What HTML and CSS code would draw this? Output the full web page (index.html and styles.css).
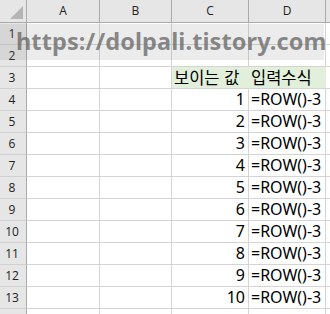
FILE: index.html
```html
<!DOCTYPE html>
<html lang="ko">
<head>
<meta charset="utf-8">
<link rel="stylesheet" href="styles.css">
</head>
<body>
<div class="sheet">
  <div class="grid">
    <div class="corner"><svg width="27" height="23" viewBox="0 0 27 23"><polygon points="23,6 23,19 10,19" fill="#b5b5b5"/></svg></div>
    <div class="ch">A</div><div class="ch">B</div><div class="ch">C</div><div class="ch">D</div><div class="ch last"></div>

    <div class="rh">1</div><div class="c"></div><div class="c"></div><div class="c"></div><div class="c"></div><div class="c last"></div>
    <div class="rh">2</div><div class="c"></div><div class="c"></div><div class="c"></div><div class="c"></div><div class="c last"></div>
    <div class="rh">3</div><div class="c"></div><div class="c"></div><div class="c fill">보이는 값</div><div class="c fill">입력수식</div><div class="c last"></div>
    <div class="rh">4</div><div class="c"></div><div class="c"></div><div class="c num">1</div><div class="c">=ROW()-3</div><div class="c last"></div>
    <div class="rh">5</div><div class="c"></div><div class="c"></div><div class="c num">2</div><div class="c">=ROW()-3</div><div class="c last"></div>
    <div class="rh">6</div><div class="c"></div><div class="c"></div><div class="c num">3</div><div class="c">=ROW()-3</div><div class="c last"></div>
    <div class="rh">7</div><div class="c"></div><div class="c"></div><div class="c num">4</div><div class="c">=ROW()-3</div><div class="c last"></div>
    <div class="rh">8</div><div class="c"></div><div class="c"></div><div class="c num">5</div><div class="c">=ROW()-3</div><div class="c last"></div>
    <div class="rh">9</div><div class="c"></div><div class="c"></div><div class="c num">6</div><div class="c">=ROW()-3</div><div class="c last"></div>
    <div class="rh">10</div><div class="c"></div><div class="c"></div><div class="c num">7</div><div class="c">=ROW()-3</div><div class="c last"></div>
    <div class="rh">11</div><div class="c"></div><div class="c"></div><div class="c num">8</div><div class="c">=ROW()-3</div><div class="c last"></div>
    <div class="rh">12</div><div class="c"></div><div class="c"></div><div class="c num">9</div><div class="c">=ROW()-3</div><div class="c last"></div>
    <div class="rh">13</div><div class="c"></div><div class="c"></div><div class="c num">10</div><div class="c">=ROW()-3</div><div class="c last"></div>
    <div class="rh"></div><div class="c"></div><div class="c"></div><div class="c"></div><div class="c"></div><div class="c last"></div>
  </div>
  <div class="watermark">https://dolpali.tistory.com</div>
</div>
</body>
</html>
```
FILE: styles.css
```css
html, body {
  margin: 0;
  padding: 0;
  background: #ffffff;
  overflow: hidden;
}
.sheet {
  position: relative;
  width: 330px;
  height: 314px;
  overflow: hidden;
}
.grid {
  display: grid;
  grid-template-columns: 27px 73px 72px 77px 77px 10px;
  grid-template-rows: 23px repeat(14, 22px);
}
.corner {
  background: #e6e6e6;
  border-right: 1px solid #ababab;
  border-bottom: 1px solid #ababab;
  box-sizing: border-box;
}
.corner svg { display: block; }
.ch {
  background: #e6e6e6;
  border-right: 1px solid #ababab;
  border-bottom: 1px solid #ababab;
  box-sizing: border-box;
  display: flex;
  align-items: center;
  justify-content: center;
  font-family: "Open Sans", "Noto Sans", sans-serif;
  font-size: 12px;
  color: #222;
  padding-bottom: 1px;
}
.ch.last { border-right: none; }
.rh {
  background: #e6e6e6;
  border-right: 1px solid #ababab;
  border-bottom: 1px solid #d0d0d0;
  box-sizing: border-box;
  display: flex;
  align-items: center;
  justify-content: center;
  font-family: "Open Sans", "Noto Sans", sans-serif;
  font-size: 12px;
  color: #222;
  padding-right: 2px;
}
.c {
  border-right: 1px solid #d4d4d4;
  border-bottom: 1px solid #d4d4d4;
  box-sizing: border-box;
  display: flex;
  align-items: flex-end;
  padding: 0 2px 0 2px;
  font-family: "Noto Sans", "Noto Sans CJK KR", sans-serif;
  font-size: 16px;
  line-height: 21px;
  color: #000;
  white-space: nowrap;
}
.c.last { border-right: none; }
.num { justify-content: flex-end; padding-right: 3px; }
.fill {
  background: #e2efda;
  border-right-color: #e2efda;
  font-family: "Noto Sans CJK KR", sans-serif;
  font-size: 16.5px;
}
.watermark {
  position: absolute;
  left: 0;
  top: 24px;
  width: 324px;
  height: 36px;
  background: rgba(120, 120, 120, 0.14);
  box-sizing: border-box;
  padding-left: 16px;
  font-family: "Noto Sans", "DejaVu Sans", sans-serif;
  font-weight: bold;
  font-size: 23.5px;
  letter-spacing: 0.1px;
  line-height: 34px;
  color: rgba(95, 95, 95, 0.72);
  white-space: nowrap;
}
```
